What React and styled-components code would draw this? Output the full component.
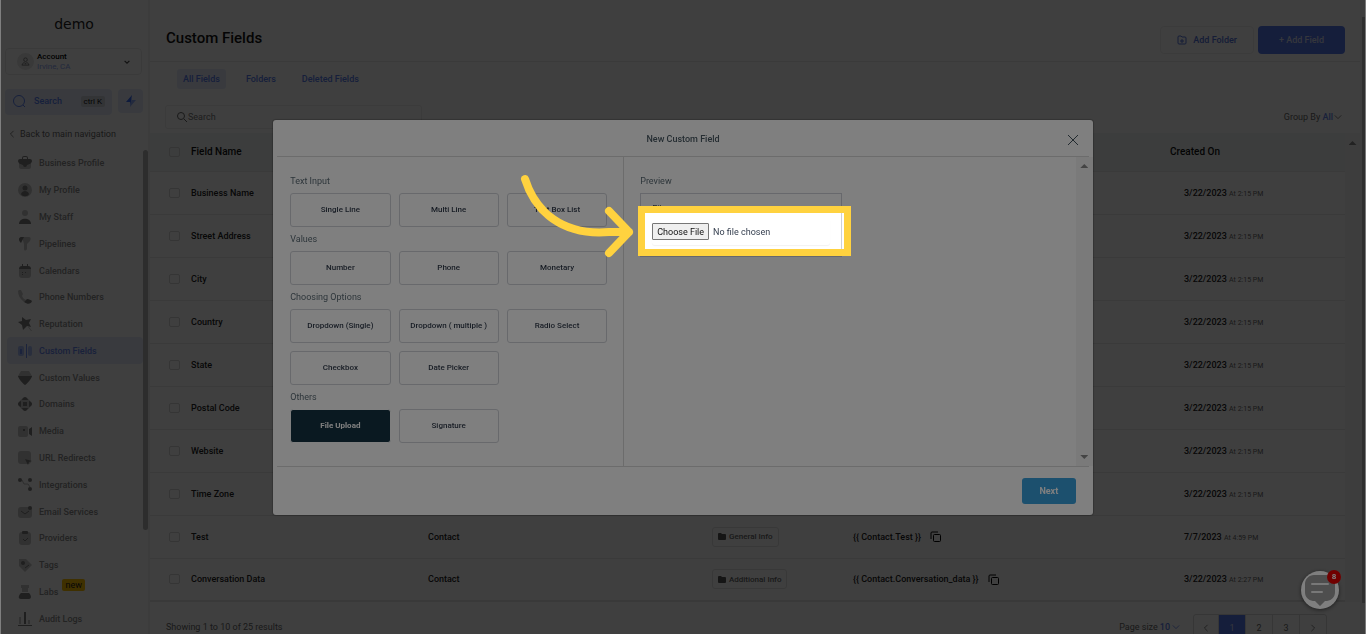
import React from "react";
import styled, { createGlobalStyle, css } from "styled-components";

const NAV_ITEMS = [
  { label: "Business Profile", icon: "briefcase" },
  { label: "My Profile", icon: "profile" },
  { label: "My Staff", icon: "staff" },
  { label: "Pipelines", icon: "funnel" },
  { label: "Calendars", icon: "calendar" },
  { label: "Phone Numbers", icon: "phone" },
  { label: "Reputation", icon: "star" },
  { label: "Custom Fields", icon: "fields", active: true },
  { label: "Custom Values", icon: "gem" },
  { label: "Domains", icon: "globe" },
  { label: "Media", icon: "media" },
  { label: "URL Redirects", icon: "redirect" },
  { label: "Integrations", icon: "nodes" },
  { label: "Email Services", icon: "mail" },
  { label: "Providers", icon: "clipboard" },
  { label: "Tags", icon: "tag" },
  { label: "Labs", icon: "flask", badge: "new" },
  { label: "Audit Logs", icon: "bars" },
];

const ROWS = [
  { name: "Business Name", date: "3/22/2023", time: "At 2:15 PM" },
  { name: "Street Address", date: "3/22/2023", time: "At 2:15 PM" },
  { name: "City", date: "3/22/2023", time: "At 2:15 PM" },
  { name: "Country", date: "3/22/2023", time: "At 2:15 PM" },
  { name: "State", date: "3/22/2023", time: "At 2:15 PM" },
  { name: "Postal Code", date: "3/22/2023", time: "At 2:15 PM" },
  { name: "Website", date: "3/22/2023", time: "At 2:15 PM" },
  { name: "Time Zone", date: "3/22/2023", time: "At 2:15 PM" },
  {
    name: "Test",
    object: "Contact",
    folder: "General Info",
    fieldKey: "{{ Contact.Test }}",
    date: "7/7/2023",
    time: "At 4:59 PM",
  },
  {
    name: "Conversation Data",
    object: "Contact",
    folder: "Additional Info",
    fieldKey: "{{ Contact.Conversation_data }}",
    date: "3/22/2023",
    time: "At 2:27 PM",
  },
];

const FIELD_GROUPS = [
  { title: "Text Input", types: ["Single Line", "Multi Line", "Text Box List"] },
  { title: "Values", types: ["Number", "Phone", "Monetary"] },
  {
    title: "Choosing Options",
    types: [
      "Dropdown (Single)",
      "Dropdown ( multiple )",
      "Radio Select",
      "Checkbox",
      "Date Picker",
    ],
  },
  { title: "Others", types: ["File Upload", "Signature"] },
];

// Two-tone glyphs on a 14px grid: "l" is the pale part, "d" the dark part.
const GLYPHS = {
  briefcase: (
    <>
      <path className="l" d="M1 6h12v5a2 2 0 0 1-2 2H3a2 2 0 0 1-2-2z" />
      <path
        className="d"
        d="M4 3V2a2 2 0 0 1 2-2h2a2 2 0 0 1 2 2v1h2a2 2 0 0 1 2 2c0 2-2 3-5 4a2 2 0 0 1-4 0C2 8 0 7 0 5a2 2 0 0 1 2-2zm1 0h4V2a1 1 0 0 0-1-1H6a1 1 0 0 0-1 1z"
      />
    </>
  ),
  profile: (
    <>
      <circle className="l" cx="7" cy="7" r="7" />
      <circle className="d" cx="7" cy="5" r="2.5" />
      <path className="d" d="M3 11c1-4 7-4 8 0-1 3-7 3-8 0z" />
    </>
  ),
  staff: (
    <>
      <circle className="l" cx="7" cy="3" r="3" />
      <path className="d" d="M1 14c0-7 12-7 12 0z" />
    </>
  ),
  funnel: (
    <>
      <path className="l" d="M4 0h7c2 0 2 2 1 4L9 7v5c-1 2-3 2-3 0V7z" />
      <path className="d" d="M1 2c0-1 1-2 2-2h3L3 6C1 4 1 3 1 2z" />
    </>
  ),
  calendar: (
    <>
      <path className="l" d="M1 5h12v6a3 3 0 0 1-3 3H4a3 3 0 0 1-3-3z" />
      <path className="d" d="M1 5c0-2 1-3 3-3V0h1v2h4V0h1v2c2 0 3 1 3 3z" />
      <path className="d" d="M4 8h1v1H4zM7 8h1v1H7zM4 10h1v1H4z" />
    </>
  ),
  phone: (
    <>
      <path className="l" d="M1 0h2l2 4-1 2c1 2 2 3 4 4l-2 2C2 9 0 5 0 1z" />
      <path className="d" d="M6 12l3-3c2 0 4 1 5 2-1 3-4 4-8 1z" />
    </>
  ),
  star: (
    <>
      <path className="d" d="M4 0l4 3 5-1-2 4 2 4-4-1-4 4-1-5-4-3 4-1z" />
      <path className="l" d="M10 10h1l3 4h-1z" />
    </>
  ),
  fields: (
    <>
      <rect className="l" x="0" y="2" width="6" height="10" rx="2" />
      <rect className="l" x="10" y="2" width="4" height="10" rx="2" />
      <rect className="d" x="2" y="5" width="2" height="5" />
      <rect className="d" x="8" y="0" width="1" height="14" />
    </>
  ),
  gem: (
    <>
      <path className="l" d="M3 0h8l3 5H0z" />
      <path className="d" d="M0 5h14c0 2-5 8-7 9-2-1-7-7-7-9z" />
    </>
  ),
  globe: (
    <>
      <circle className="l" cx="7" cy="7" r="6" />
      <path
        className="d"
        d="M5 5h4v4H5zM4 3c1-4 5-4 6 0zM4 11h6c-1 4-5 4-6 0zM3 4v6c-4-1-4-5 0-6zM11 4c4 1 4 5 0 6z"
      />
    </>
  ),
  media: (
    <>
      <rect className="l" x="0" y="2" width="10" height="11" rx="2" />
      <path className="d" d="M11 5l3-2v9l-3-2zM5 5h2v2H5z" />
    </>
  ),
  redirect: (
    <>
      <rect className="l" x="0" y="0" width="13" height="13" rx="3" />
      <path className="d" d="M7 8l7 2-3 1-1 3z" />
    </>
  ),
  nodes: (
    <>
      <path className="line" d="M4 2l2 4h4l2 3" />
      <circle className="d" cx="2" cy="2" r="2" />
      <circle className="d" cx="12" cy="2" r="2" />
      <circle className="d" cx="12" cy="11" r="2" />
    </>
  ),
  mail: (
    <>
      <rect className="l" x="0" y="2" width="14" height="11" rx="3" />
      <path className="stroke" d="M3 6l4 3 4-3" />
      <circle className="d" cx="12" cy="3" r="2" />
    </>
  ),
  clipboard: (
    <>
      <rect className="l" x="1" y="1" width="12" height="13" rx="3" />
      <rect className="d" x="4" y="0" width="6" height="3" rx="1" />
      <path className="stroke" d="M5 8l2 2 3-3" />
    </>
  ),
  tag: (
    <>
      <path className="l" d="M1 1h7l6 6-7 7-6-6z" />
      <circle className="d" cx="5" cy="5" r="2" />
      <path className="stroke" d="M7 10l4-3" />
    </>
  ),
  flask: (
    <>
      <path className="l" d="M3 0h8v3h-1v4H4V3H3z" />
      <path className="d" d="M3 8h8c3 3 2 6 0 6H3c-3 0-3-3 0-6z" />
    </>
  ),
  bars: (
    <>
      <path className="l" d="M1 5h2v7H1zM10 8h2v4h-2z" />
      <path className="d" d="M6 0h2v12H6zM0 13h14v1H0z" />
    </>
  ),
};

function NavIcon({ name, active }) {
  return (
    <Glyph viewBox="0 0 14 14" $active={active} aria-hidden="true">
      {GLYPHS[name]}
    </Glyph>
  );
}

function Chevron({ direction = "down", size = 8 }) {
  const paths = {
    down: "M1 3l4 4 4-4",
    left: "M7 1L3 5l4 4",
    right: "M3 1l4 4-4 4",
  };
  return (
    <StrokeIcon viewBox="0 0 10 10" $size={size} aria-hidden="true">
      <path d={paths[direction]} />
    </StrokeIcon>
  );
}

function SearchIcon({ size = 10 }) {
  return (
    <StrokeIcon viewBox="0 0 10 10" $size={size} aria-hidden="true">
      <circle cx="4" cy="4" r="3.5" />
      <path d="M7 7l3 3" />
    </StrokeIcon>
  );
}

function Sidebar() {
  return (
    <SidebarWrapper>
      <Logo>demo</Logo>
      <AccountButton type="button">
        <Avatar>
          <StrokeIcon viewBox="0 0 10 10" $size={9} aria-hidden="true">
            <circle cx="5" cy="3" r="2" />
            <path d="M3 6L1 9h8L7 6M4 6l1 2 1-2" />
          </StrokeIcon>
        </Avatar>
        <AccountText>
          <strong>Account</strong>
          <span>Irvine, CA</span>
        </AccountText>
        <Chevron size={6} />
      </AccountButton>
      <QuickRow>
        <QuickSearch type="button">
          <StrokeIcon viewBox="0 0 14 14" $size={14} aria-hidden="true">
            <circle cx="7" cy="7" r="5.5" />
            <path d="M11 11l2 2" />
          </StrokeIcon>
          <span>Search</span>
          <kbd>ctrl K</kbd>
        </QuickSearch>
        <BoltButton type="button" aria-label="Quick actions">
          <svg viewBox="0 0 12 12" width="12" height="12">
            <path d="M7 0L1 7h4v5z" fill="#3b6cf5" />
            <path d="M7 0v5h4l-6 7 1-5z" fill="#8eaaf8" />
          </svg>
        </BoltButton>
      </QuickRow>
      <BackLink href="#main">
        <Chevron direction="left" size={8} />
        Back to main navigation
      </BackLink>
      <NavArea>
        <Nav>
          {NAV_ITEMS.map((item) => (
            <NavLink key={item.label} href="#settings" $active={item.active}>
              <NavIcon name={item.icon} active={item.active} />
              {item.label}
              {item.badge && <NewBadge>{item.badge}</NewBadge>}
            </NavLink>
          ))}
        </Nav>
        <NavThumb />
      </NavArea>
    </SidebarWrapper>
  );
}

function FieldsTable() {
  return (
    <TableArea>
      <Table>
        <colgroup>
          <col width="278" />
          <col width="284" />
          <col width="141" />
          <col />
          <col width="175" />
        </colgroup>
        <thead>
          <tr>
            <th>
              <CheckLabel>
                <input type="checkbox" />
                Field Name
              </CheckLabel>
            </th>
            <th />
            <th />
            <th />
            <th>Created On</th>
          </tr>
        </thead>
        <tbody>
          {ROWS.map((row) => (
            <tr key={row.name}>
              <td>
                <CheckLabel>
                  <input type="checkbox" />
                  {row.name}
                </CheckLabel>
              </td>
              <td>{row.object}</td>
              <td>
                {row.folder && (
                  <FolderTag>
                    <svg viewBox="0 0 8 7" width="8" height="7">
                      <path d="M0 1a1 1 0 0 1 1-1h2l1 1h3a1 1 0 0 1 1 1v4a1 1 0 0 1-1 1H1a1 1 0 0 1-1-1z" />
                    </svg>
                    {row.folder}
                  </FolderTag>
                )}
              </td>
              <td>
                {row.fieldKey && (
                  <KeyCell>
                    {row.fieldKey}
                    <CopyButton type="button" aria-label="Copy key">
                      <svg viewBox="0 0 11 11" width="11" height="11">
                        <rect x="3.5" y="3.5" width="7" height="7" rx="1" />
                        <path d="M1 8V2a1 1 0 0 1 1-1h6" />
                      </svg>
                    </CopyButton>
                  </KeyCell>
                )}
              </td>
              <DateCell>
                {row.date} <small>{row.time}</small>
              </DateCell>
            </tr>
          ))}
        </tbody>
      </Table>
      <TableTrack>
        <Arrow />
      </TableTrack>
    </TableArea>
  );
}

function Content() {
  return (
    <Main>
      <PageHeader>
        <h1>Custom Fields</h1>
        <OutlineButton type="button">
          <StrokeIcon viewBox="0 0 10 10" $size={10} aria-hidden="true">
            <path d="M1 8V2a1 1 0 0 1 1-1h2l1 1h3a1 1 0 0 1 1 1v5a1 1 0 0 1-1 1H2a1 1 0 0 1-1-1zM5 4v4M3 6h4" />
          </StrokeIcon>
          Add Folder
        </OutlineButton>
        <PrimaryButton type="button">+ Add Field</PrimaryButton>
      </PageHeader>
      <Tabs>
        <Tab href="#all" $active>
          All Fields
        </Tab>
        <Tab href="#folders">Folders</Tab>
        <Tab href="#deleted">Deleted Fields</Tab>
      </Tabs>
      <Toolbar>
        <SearchBox>
          <SearchIcon />
          <input type="text" placeholder="Search" aria-label="Search fields" />
        </SearchBox>
        <GroupBy type="button">
          <span>
            Group By <b>All</b>
          </span>
          <Chevron />
        </GroupBy>
      </Toolbar>
      <FieldsTable />
      <TableFooter>
        <span>Showing 1 to 10 of 25 results</span>
        <PageSize type="button">
          Page size <b>10</b>
          <Chevron />
        </PageSize>
        <Pager aria-label="Pagination">
          <PageButton type="button" aria-label="Previous page">
            <Chevron direction="left" />
          </PageButton>
          <PageButton type="button" $active>
            1
          </PageButton>
          <PageButton type="button">2</PageButton>
          <PageButton type="button">3</PageButton>
          <PageButton type="button" aria-label="Next page">
            <Chevron direction="right" />
          </PageButton>
        </Pager>
      </TableFooter>
    </Main>
  );
}

function ChatWidget() {
  return (
    <ChatButton type="button" aria-label="Open chat">
      <svg viewBox="0 0 38 38" width="38" height="38">
        <path
          d="M13 4h13c5 0 8 4 8 9v8c0 5-3 8-8 9h-2l-5 5-5-5h-2c-5-1-8-4-8-9v-8c0-5 4-9 9-9z"
          fill="#9c9c9c"
        />
        <path
          d="M11 13h16M11 21h10"
          stroke="#f0f0f0"
          strokeWidth="2"
          strokeLinecap="round"
        />
      </svg>
      <ChatCount>8</ChatCount>
    </ChatButton>
  );
}

function NewFieldModal() {
  return (
    <ModalWrapper>
      <ModalInner role="dialog" aria-label="New Custom Field">
        <ModalHeader>
          <h2>New Custom Field</h2>
          <CloseButton type="button" aria-label="Close">
            <svg viewBox="0 0 10 10" width="10" height="10">
              <path d="M0 0l10 10M10 0L0 10" />
            </svg>
          </CloseButton>
        </ModalHeader>
        <ModalBody>
          <TypePanel>
            {FIELD_GROUPS.map((group) => (
              <section key={group.title}>
                <SectionTitle>{group.title}</SectionTitle>
                <TypeGrid>
                  {group.types.map((type) => (
                    <TypeButton
                      key={type}
                      type="button"
                      $active={type === "File Upload"}
                    >
                      {type}
                    </TypeButton>
                  ))}
                </TypeGrid>
              </section>
            ))}
          </TypePanel>
          <PreviewPanel>
            <SectionTitle>Preview</SectionTitle>
            <PreviewBox>
              <label htmlFor="preview-file">File</label>
              <FileInput id="preview-file" type="file" />
              <Spotlight>
                <svg viewBox="0 0 120 90" width="120" height="90">
                  <path d="M8 8C18 40 45 65 92 61h20M92 40l20 21-20 21" />
                </svg>
              </Spotlight>
            </PreviewBox>
          </PreviewPanel>
          <ModalTrack>
            <Arrow />
            <Arrow $down />
          </ModalTrack>
        </ModalBody>
        <ModalFooter>
          <NextButton type="button">Next</NextButton>
        </ModalFooter>
      </ModalInner>
    </ModalWrapper>
  );
}

export default function App() {
  return (
    <>
      <GlobalStyle />
      <Page>
        <Sidebar />
        <Content />
        <PageTrack>
          <span />
        </PageTrack>
      </Page>
      <ModalOverlay />
      <ChatWidget />
      <NewFieldModal />
    </>
  );
}

const GlobalStyle = createGlobalStyle`
  * {
    box-sizing: border-box;
  }
  body {
    margin: 0;
    overflow: hidden;
    background: #fff;
    font-family: Roboto, "Liberation Sans", sans-serif;
    font-size: 9px;
    color: #333;
  }
  h1, h2, h3 {
    margin: 0;
  }
  a {
    text-decoration: none;
    color: inherit;
  }
  button, input {
    font-family: inherit;
    font-size: inherit;
    color: inherit;
  }
  button {
    padding: 0;
    border: 0;
    background: none;
  }
`;

const StrokeIcon = styled.svg`
  width: ${(props) => props.$size}px;
  height: ${(props) => props.$size}px;
  flex: none;
  fill: none;
  stroke: currentColor;
  stroke-width: 1;
`;

const Glyph = styled.svg`
  width: 14px;
  height: 14px;
  flex: none;
  fill: none;
  .l {
    fill: ${(props) => (props.$active ? "#a6baf5" : "#c6c6c6")};
  }
  .d {
    fill: ${(props) => (props.$active ? "#6c8cf0" : "#7c7c7c")};
  }
  .line {
    stroke: #b8b8b8;
  }
  .stroke {
    stroke: #7c7c7c;
  }
`;

const Page = styled.div`
  display: flex;
  height: 100vh;
`;

const SidebarWrapper = styled.aside`
  width: 150px;
  flex: none;
  display: flex;
  flex-direction: column;
  border-right: 2px solid #f0f0f0;
`;

const Logo = styled.div`
  height: 48px;
  line-height: 48px;
  text-align: center;
  font-family: "DejaVu Sans", sans-serif;
  font-size: 14px;
  color: #222;
`;

const AccountButton = styled.button`
  display: flex;
  align-items: center;
  height: 27px;
  margin: 0 6px 0 5px;
  padding: 0 11px;
  border: 1px solid #eaeaea;
  border-radius: 4px;
  text-align: left;
  color: #444;
  > svg {
    stroke-width: 2;
  }
`;

const Avatar = styled.span`
  display: flex;
  align-items: center;
  justify-content: center;
  width: 17px;
  height: 17px;
  margin-right: 3px;
  border-radius: 50%;
  background: #e4e4e4;
  color: #777;
`;

const AccountText = styled.span`
  flex: 1;
  display: flex;
  flex-direction: column;
  line-height: 10px;
  font-size: 8px;
  strong {
    font-weight: 500;
    color: #000;
  }
  span {
    color: #8ca4f0;
  }
`;

const QuickRow = styled.div`
  display: flex;
  align-items: flex-start;
  gap: 6px;
  margin: 14px 5px 0 5px;
`;

const QuickSearch = styled.button`
  flex: 1;
  display: flex;
  align-items: center;
  height: 26px;
  padding: 0 7px 2px;
  border-radius: 4px;
  background: #e6ebfb;
  font-weight: 500;
  color: #5a80f0;
  span {
    flex: 1;
    padding-left: 8px;
    text-align: left;
  }
  kbd {
    padding: 0 3px;
    border-radius: 2px;
    background: #cfd2da;
    font-family: inherit;
    font-size: 8px;
    font-weight: 400;
    line-height: 11px;
    color: #111;
  }
`;

const BoltButton = styled.button`
  display: flex;
  align-items: center;
  justify-content: center;
  width: 25px;
  height: 24px;
  border-radius: 4px;
  background: #e6ebfb;
`;

const BackLink = styled.a`
  display: flex;
  align-items: center;
  gap: 4px;
  height: 35px;
  padding: 2px 0 0 8px;
  font-size: 9px;
  color: #666;
`;

const NavArea = styled.div`
  flex: 1;
  display: flex;
  align-items: stretch;
  min-height: 0;
`;

const Nav = styled.nav`
  flex: 1;
  display: flex;
  flex-direction: column;
  padding: 0 0 2px 7px;
`;

const NavLink = styled.a`
  flex: 1;
  min-height: 24px;
  display: flex;
  align-items: center;
  gap: 7px;
  padding-left: 11px;
  border-radius: 4px;
  font-weight: 500;
  color: #8c8c8c;
  ${(props) =>
    props.$active &&
    css`
      background: #e4eafb;
      color: #6484ec;
    `}
`;

const NewBadge = styled.span`
  align-self: flex-start;
  margin-left: -3px;
  padding: 0 3px;
  border-radius: 2px;
  background: #ffc000;
  font-size: 9px;
  font-weight: 400;
  line-height: 12px;
  color: #222;
`;

const NavThumb = styled.div`
  width: 5px;
  height: 380px;
  border-radius: 3px;
  background: #b4b4b4;
`;

const Main = styled.main`
  flex: 1;
  min-width: 0;
  display: flex;
  flex-direction: column;
  > * {
    flex: none;
  }
`;

const PageHeader = styled.header`
  display: flex;
  align-items: center;
  gap: 4px;
  height: 62px;
  padding: 19px 15px 0 16px;
  border-bottom: 1px solid #e9e9e9;
  h1 {
    flex: 1;
    line-height: 20px;
    padding-bottom: 4px;
    font-size: 15px;
    font-weight: 500;
    color: #111;
  }
`;

const OutlineButton = styled.button`
  display: flex;
  align-items: center;
  gap: 6px;
  height: 28px;
  padding: 0 16px;
  border: 1px solid #efefef;
  border-radius: 4px;
  font-weight: 500;
  color: #5474dc;
`;

const PrimaryButton = styled.button`
  height: 28px;
  padding: 0 21px;
  border-radius: 4px;
  background: #5478ec;
  font-weight: 500;
  color: #d4dcf4;
`;

const Tabs = styled.nav`
  display: flex;
  gap: 14px;
  padding: 7px 0 0 27px;
`;

const Tab = styled.a`
  padding: 0 6px;
  border-radius: 3px;
  line-height: 20px;
  font-weight: 500;
  color: #5a7cec;
  background: ${(props) => (props.$active ? "#e6ebfb" : "none")};
`;

const Toolbar = styled.div`
  display: flex;
  align-items: center;
  justify-content: space-between;
  padding: 16px 18px 4px 15px;
`;

const SearchBox = styled.div`
  display: flex;
  align-items: center;
  gap: 1px;
  width: 257px;
  height: 24px;
  padding: 0 11px;
  border: 1px solid #ededed;
  border-radius: 3px;
  color: #666;
  input {
    flex: 1;
    min-width: 0;
    padding: 0;
    border: 0;
    outline: 0;
    background: none;
  }
  input::placeholder {
    color: #777;
  }
`;

const GroupBy = styled.button`
  display: flex;
  align-items: center;
  gap: 1px;
  color: #666;
  b {
    font-weight: 500;
    color: #6484ec;
  }
`;

const TableArea = styled.div`
  display: flex;
`;

const Table = styled.table`
  flex: 1;
  min-width: 0;
  table-layout: fixed;
  border-collapse: collapse;
  border-bottom: 2px solid #e4e4e4;
  th,
  td {
    height: 43px;
    padding: 0;
    border-bottom: 1px solid #e9e9e9;
    text-align: left;
    font-weight: 500;
    color: #222;
  }
  th {
    height: 38px;
    background: #f0f5f4;
    font-size: 10px;
    color: #111;
  }
`;

const CheckLabel = styled.label`
  display: flex;
  align-items: center;
  gap: 11px;
  padding-left: 19px;
  input {
    appearance: none;
    width: 11px;
    height: 10px;
    margin: 0;
    border: 1px solid #d4d4d4;
    border-radius: 2px;
  }
`;

const FolderTag = styled.span`
  display: inline-flex;
  align-items: center;
  gap: 3px;
  height: 20px;
  padding: 0 5px;
  border: 1px solid #e2e2e2;
  border-radius: 3px;
  font-size: 8px;
  color: #666;
  svg {
    fill: #555;
  }
`;

const KeyCell = styled.span`
  display: flex;
  align-items: center;
  gap: 9px;
`;

const CopyButton = styled.button`
  display: flex;
  svg {
    overflow: visible;
    fill: none;
    stroke: #000;
    stroke-width: 1;
  }
`;

const DateCell = styled.td`
  && {
    padding-left: 14px;
  }
  small {
    font-size: 7px;
    font-weight: 400;
    color: #666;
  }
`;

const TableTrack = styled.div`
  width: 15px;
  padding-top: 8px;
  background: #f6f6f6;
`;

const Arrow = styled.span`
  display: block;
  width: 8px;
  height: 4px;
  margin: 0 auto;
  background: #888;
  clip-path: ${(props) =>
    props.$down
      ? "polygon(0 0, 100% 0, 50% 100%)"
      : "polygon(50% 0, 100% 100%, 0 100%)"};
`;

const TableFooter = styled.footer`
  display: flex;
  align-items: flex-start;
  padding: 12px 33px 0 16px;
  line-height: 26px;
  color: #666;
  > span {
    flex: 1;
  }
`;

const PageSize = styled.button`
  display: flex;
  align-items: center;
  gap: 2px;
  height: 26px;
  margin-right: 13px;
  b {
    font-weight: 500;
    color: #5a7cec;
  }
  svg {
    color: #5a7cec;
  }
`;

const Pager = styled.nav`
  display: flex;
  border: 1px solid #d8d8d8;
  border-radius: 3px;
`;

const PageButton = styled.button`
  display: flex;
  align-items: center;
  justify-content: center;
  width: 27px;
  height: 26px;
  border-left: 1px solid #d8d8d8;
  color: #666;
  &:first-child {
    width: 24px;
    border-left: 0;
  }
  ${(props) =>
    props.$active &&
    css`
      background: #5478ec;
      color: #d4dcf4;
    `}
`;

const PageTrack = styled.div`
  width: 6px;
  padding: 17px 1px 0 2px;
  background: #f4f4f4;
  span {
    display: block;
    height: 586px;
    background: #b8b8b8;
  }
`;

const ModalOverlay = styled.div`
  position: fixed;
  inset: 0 1px;
  background: rgba(0, 0, 0, 0.5);
`;

const ChatButton = styled.button`
  position: fixed;
  right: 27px;
  bottom: 25px;
  width: 38px;
  height: 38px;
  border-radius: 50%;
  background: #fff;
  box-shadow: 0 1px 4px rgba(0, 0, 0, 0.5);
  svg {
    display: block;
  }
`;

const ChatCount = styled.span`
  position: absolute;
  top: -1px;
  right: -2px;
  width: 14px;
  height: 14px;
  border-radius: 50%;
  background: #e00000;
  font-size: 8px;
  font-weight: 700;
  line-height: 14px;
  color: #fff;
`;

const ModalWrapper = styled.div`
  position: fixed;
  inset: 0;
  display: flex;
  align-items: flex-start;
  justify-content: center;
  padding-top: 120px;
`;

const ModalInner = styled.div`
  width: 60%;
  border-radius: 3px;
  background: #fff;
  box-shadow: 0 0 1px 1px rgba(0, 0, 0, 0.2);
`;

const ModalHeader = styled.header`
  display: flex;
  align-items: center;
  height: 37px;
  margin: 0 4px;
  padding: 2px 11px 0;
  border-bottom: 1px solid #d8d8d8;
  h2 {
    flex: 1;
    padding-left: 10px;
    text-align: center;
    font-size: 9px;
    font-weight: 500;
    color: #4a5a64;
  }
`;

const CloseButton = styled.button`
  display: flex;
  padding-top: 2px;
  svg {
    overflow: visible;
    stroke: #44545e;
    stroke-width: 1;
  }
`;

const ModalBody = styled.div`
  display: flex;
`;

const TypePanel = styled.div`
  width: 351px;
  padding: 12px 16px 23px 17px;
  border-right: 1px solid #d8d8d8;
`;

const SectionTitle = styled.h3`
  font-size: 9px;
  font-weight: 400;
  line-height: 24px;
  color: #5c6c76;
`;

const TypeGrid = styled.div`
  display: grid;
  grid-template-columns: repeat(3, 1fr);
  gap: 8px;
`;

const TypeButton = styled.button`
  height: 34px;
  padding-bottom: 2px;
  border: 1px solid #d0d3d8;
  border-radius: 3px;
  font-size: 8px;
  font-weight: 500;
  color: #323c4c;
  ${(props) =>
    props.$active &&
    css`
      border-color: #fff;
      background: #143242;
      font-weight: 700;
      color: #fff;
    `}
`;

const PreviewPanel = styled.div`
  flex: 1;
  padding: 12px 16px;
`;

const PreviewBox = styled.div`
  position: relative;
  width: 202px;
  height: 64px;
  padding: 7px 11px 10px;
  border: 1px solid #ced1d8;
  color: #44525e;
  label {
    display: block;
    margin-bottom: 1px;
    line-height: 16px;
  }
`;

const FileInput = styled.input`
  display: block;
  width: 100%;
  height: 27px;
  padding: 5px 0;
  border-radius: 3px;
  box-shadow: 0 1px 1px #f2f2f2;
  color: #333d4d;
  &::file-selector-button {
    height: 17px;
    margin: 0 4px 0 0;
    padding: 0 4px;
    border: 1px solid #767676;
    border-radius: 1px;
    background: #efefef;
    font-family: inherit;
    font-size: 9px;
    color: #111;
  }
`;

// Frames the file input and darkens everything around it.
const Spotlight = styled.div`
  position: absolute;
  z-index: 1;
  inset: 12px -10px 0 -3px;
  border: 7px solid #ffd23f;
  box-shadow: 0 0 0 9999px rgba(0, 0, 0, 0.5);
  pointer-events: none;
  svg {
    position: absolute;
    top: -42px;
    right: calc(100% + 8px);
    fill: none;
    stroke: #ffd23f;
    stroke-width: 8;
    stroke-linecap: round;
    stroke-linejoin: round;
  }
`;

const ModalTrack = styled.div`
  display: flex;
  flex-direction: column;
  justify-content: space-between;
  width: 17px;
  padding: 7px 0;
  background: #f4f4f4;
`;

const ModalFooter = styled.footer`
  display: flex;
  justify-content: flex-end;
  margin: 0 4px;
  padding: 11px 13px 11px;
  border-top: 1px solid #d8d8d8;
`;

const NextButton = styled.button`
  width: 54px;
  height: 26px;
  border-radius: 3px;
  background: #38a0dc;
  font-weight: 700;
  color: #fff;
`;
